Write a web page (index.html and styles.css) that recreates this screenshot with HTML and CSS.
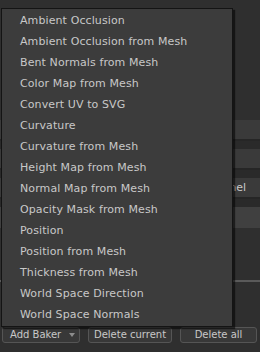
FILE: index.html
```html
<!DOCTYPE html>
<html>
<head>
<meta charset="utf-8">
<link rel="stylesheet" href="styles.css">
</head>
<body>
<div class="page">
  <div class="backdrop">
    <div class="row-gap top"></div>
    <div class="brow"></div>
    <div class="bsep"></div>
    <div class="brow"></div>
    <div class="bsep"></div>
    <div class="brow"><span class="btext">Channel</span></div>
    <div class="bsep"></div>
    <div class="brow light"></div>
    <div class="row-gap mid"></div>
    <div class="hline"></div>
    <div class="row-gap low"></div>
  </div>
  <ul class="menu">
    <li>Ambient Occlusion</li>
    <li>Ambient Occlusion from Mesh</li>
    <li>Bent Normals from Mesh</li>
    <li>Color Map from Mesh</li>
    <li>Convert UV to SVG</li>
    <li>Curvature</li>
    <li>Curvature from Mesh</li>
    <li>Height Map from Mesh</li>
    <li>Normal Map from Mesh</li>
    <li>Opacity Mask from Mesh</li>
    <li>Position</li>
    <li>Position from Mesh</li>
    <li>Thickness from Mesh</li>
    <li>World Space Direction</li>
    <li>World Space Normals</li>
  </ul>
  <div class="toolbar">
    <button class="btn add"><span>Add Baker</span><span class="caret"></span></button>
    <button class="btn cur">Delete current</button>
    <button class="btn all">Delete all</button>
  </div>
</div>
</body>
</html>
```
FILE: styles.css
```css
* { box-sizing: border-box; }
html, body { margin: 0; padding: 0; }
body {
  background: #2f2f2f;
  font-family: "DejaVu Sans", Verdana, sans-serif;
  font-size: 11px;
  color: #c8c8c8;
  width: 260px;
  height: 352px;
  overflow: hidden;
}
.page {
  position: relative;
  width: 260px;
  height: 352px;
}
.backdrop {
  display: flex;
  flex-direction: column;
  height: 326px;
}
.row-gap.top { height: 120px; }
.brow {
  height: 19px;
  background: #3a3a3a;
  display: flex;
  align-items: center;
  justify-content: flex-end;
  padding-right: 14px;
}
.brow.light { height: 21px; background: #404040; }
.bsep {
  height: 10px;
  background: #2a2a2a;
  border-top: 2px solid #262626;
}
.btext { color: #c8c8c8; }
.row-gap.mid { height: 52px; }
.hline { height: 2px; background: #5a5a5a; }
.row-gap.low { flex: 1; }
.menu {
  position: absolute;
  left: 1px;
  top: 8px;
  width: 232px;
  margin: 0;
  padding: 1px 0;
  list-style: none;
  background: #3c3c3c;
  border: 1px solid #141414;
  box-shadow: 2px 2px 1px rgba(0,0,0,0.55);
}
.menu li {
  height: 21px;
  line-height: 21px;
  padding-left: 18px;
  white-space: nowrap;
  letter-spacing: 0.1px;
}
.toolbar {
  display: flex;
  gap: 8px;
  padding: 0 3px 0 2px;
  margin-top: 1px;
}
.btn {
  height: 16px;
  background: #383838;
  border: 1px solid #555;
  border-radius: 3px;
  color: #c8c8c8;
  font-family: inherit;
  font-size: 10px;
  line-height: 14px;
  padding: 0;
  white-space: nowrap;
  display: flex;
  align-items: center;
  justify-content: center;
}
.btn.add { width: 78px; justify-content: space-between; padding: 0 4px 0 7px; }
.btn.cur { width: 84px; }
.btn.all { width: 77px; }
.caret {
  width: 0; height: 0;
  border-left: 3.5px solid transparent;
  border-right: 3.5px solid transparent;
  border-top: 4px solid #8c8c8c;
}
```
